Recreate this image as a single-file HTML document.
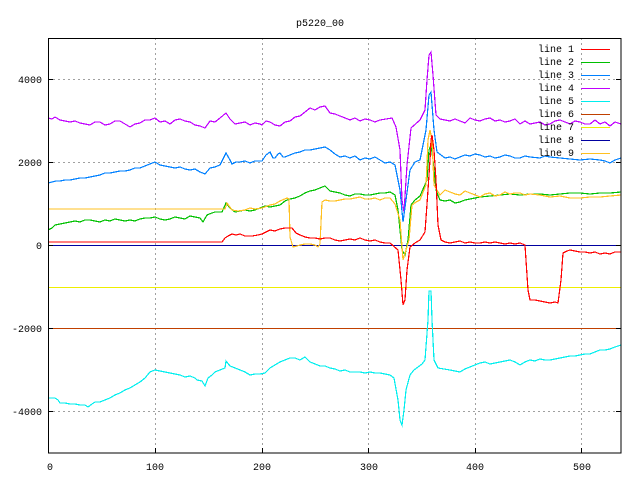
<!DOCTYPE html>
<html><head><meta charset="utf-8"><style>
html,body{margin:0;padding:0;background:#fff;}
svg{display:block;}
text{font-family:"Liberation Mono",monospace;font-size:10px;fill:#000;}
</style></head><body>
<svg width="640" height="480" viewBox="0 0 640 480" xmlns="http://www.w3.org/2000/svg" shape-rendering="crispEdges">
<rect width="640" height="480" fill="#fff"/>
<g stroke="#a0a0a0" stroke-width="1" stroke-dasharray="2,3" fill="none">
<line x1="155.5" y1="38" x2="155.5" y2="453"/>
<line x1="262.5" y1="38" x2="262.5" y2="453"/>
<line x1="368.5" y1="38" x2="368.5" y2="453"/>
<line x1="475.5" y1="38" x2="475.5" y2="453"/>
<line x1="581.5" y1="38" x2="581.5" y2="453"/>
<line x1="48" y1="79.5" x2="621" y2="79.5"/>
<line x1="48" y1="162.5" x2="621" y2="162.5"/>
<line x1="48" y1="328.5" x2="621" y2="328.5"/>
<line x1="48" y1="411.5" x2="621" y2="411.5"/>
</g>
<g fill="none" stroke-width="1.2">
<line x1="48" y1="287.5" x2="621" y2="287.5" stroke="#eeee00"/>
<line x1="48" y1="245.5" x2="621" y2="245.5" stroke="#0000a0"/>
<line x1="48" y1="328.5" x2="621" y2="328.5" stroke="#c04000"/>
<polyline stroke="#c000ff" points="48,118 52,119 55,117 60,120 65,121 70,122 75,121 80,123 85,124 90,125 95,122 100,122 105,125 110,124 115,121 120,121 125,124 130,127 135,124 140,123 145,120 150,120 155,118 160,122 165,121 170,124 175,120 180,119 185,121 190,122 195,125 200,126 205,128 210,121 215,122 220,118 226,113 230,119 235,124 240,123 245,122 250,125 255,123 260,124 262,125 266,121 270,122 275,125 280,126 285,122 290,121 295,117 300,116 305,112 310,108 315,110 320,107 325,106 330,113 335,114 340,116 345,118 350,120 355,118 360,121 365,119 370,120 375,122 380,120 386,119 392,118 396,127 400,150 402,200 404,212 407,165 411,128 420,120 425,110 427,80 429,55 431,52 433,75 436,115 440,119 445,120 450,121 455,119 460,121 465,123 470,118 475,120 480,121 485,119 490,118 495,121 500,120 505,122 510,121 515,119 520,124 525,121 530,124 535,123 540,122 545,125 550,124 555,121 560,120 565,122 570,124 575,121 580,122 585,124 590,124 595,120 600,124 605,122 610,126 615,122 621,124"/>
<polyline stroke="#0080ff" points="48,183 52,182 56,181 60,181 65,180 70,180 75,179 80,178 85,178 90,177 95,176 100,175 105,173 110,173 115,172 120,171 125,171 130,170 135,168 140,168 145,166 150,164 155,162 160,165 165,166 170,167 175,168 180,167 185,169 190,170 195,169 200,172 205,174 210,168 215,167 220,165 226,153 230,160 232,164 236,162 240,162 245,161 250,163 255,161 262,161 266,155 270,152 273,158 275,158 278,154 280,153 283,157 285,157 290,155 295,153 300,152 305,150 310,150 315,149 320,148 325,147 330,150 335,154 340,157 345,156 350,158 355,156 360,160 365,158 370,159 375,157 380,160 385,163 390,162 395,165 400,190 403,222 406,200 410,170 415,162 420,160 426,130 429,95 431,92 434,130 437,152 445,158 450,157 455,159 460,157 465,155 470,156 475,154 480,155 485,157 490,156 495,158 500,157 505,155 510,156 515,158 520,158 525,156 530,157 540,158 545,156 550,157 560,158 570,159 580,160 590,159 600,160 605,161 610,163 615,160 621,158"/>
<polyline stroke="#00c000" points="48,230 52,228 55,225 60,224 65,223 70,222 75,221 80,222 85,220 90,220 95,221 100,222 105,220 110,221 115,219 120,220 125,221 130,220 135,221 140,219 145,218 150,218 155,217 160,219 165,220 170,219 175,217 180,218 185,219 190,216 195,217 200,218 203,222 207,215 212,213 215,212 222,212 226,203 230,208 235,212 240,211 245,210 250,211 255,210 260,208 265,206 270,207 275,206 280,205 285,201 290,199 295,198 300,196 305,193 310,191 315,190 320,188 325,186 330,191 335,192 340,193 345,195 350,196 355,194 360,194 365,195 370,195 375,194 380,193 385,193 390,192 395,195 398,210 402,250 405,255 408,240 411,205 415,200 420,196 427,180 429,150 431,145 433,160 436,190 440,200 445,201 450,200 455,203 460,202 465,200 470,199 475,198 480,197 490,196 500,195 510,194 520,195 530,194 540,194 550,195 560,194 570,193 580,193 590,194 600,193 610,193 621,192"/>
<polyline stroke="#ffc020" points="48,209 225,209 227,203 232,210 238,211 245,210 250,208 255,209 262,208 270,205 275,204 280,201 287,198 289,199 290,237 293,247 297,246 300,245 305,244 310,244 315,245 318,247 320,244 322,202 325,200 330,201 335,201 340,200 345,199 350,199 355,198 360,197 365,199 370,199 375,198 380,200 385,198 390,198 395,204 400,220 403,260 406,250 409,240 412,205 416,202 420,200 426,185 428,140 430,130 432,140 434,185 440,195 445,190 450,192 455,194 460,195 465,191 470,193 475,195 480,197 485,194 490,193 495,196 500,195 505,192 510,194 515,193 520,193 525,195 530,194 540,195 550,197 560,196 570,198 580,198 590,197 600,197 610,196 621,195"/>
<polyline stroke="#ff0000" points="48,242 222,242 225,238 228,236 232,234 236,235 240,234 245,236 252,236 258,235 262,234 266,232 270,230 275,231 280,229 285,228 292,228 296,233 300,235 305,237 310,238 315,238 320,239 325,238 330,238 335,240 340,241 345,240 350,239 355,240 360,238 365,240 370,241 375,240 380,242 385,243 390,243 398,250 401,280 403,305 405,300 407,270 410,247 415,243 420,240 425,232 428,190 430,160 431,140 432,135 434,150 436,180 438,225 441,240 445,242 450,243 455,242 460,241 465,243 470,242 475,243 480,243 485,242 490,243 495,242 500,243 505,244 510,243 515,244 520,243 525,245 528,290 530,300 535,300 540,301 545,302 550,303 555,302 558,303 561,280 563,253 567,251 570,250 575,251 580,252 585,252 590,253 595,252 600,254 605,253 610,254 615,252 621,252"/>
<polyline stroke="#00eeee" points="48,398 52,398 55,398 58,400 60,403 65,403 70,404 75,404 80,405 85,405 88,407 92,404 95,402 100,402 105,400 110,398 115,395 120,393 125,390 130,388 135,385 140,382 145,378 150,372 155,370 160,371 165,372 170,373 175,374 180,375 185,377 190,376 195,378 197,380 202,381 205,386 208,378 212,375 215,372 220,370 225,368 226,361 230,366 235,368 240,370 245,372 250,375 255,374 260,374 265,373 270,368 275,365 280,362 285,360 290,358 295,358 300,360 305,357 310,362 315,364 320,366 325,366 330,368 335,369 340,371 345,370 350,372 355,372 360,372 365,373 370,372 375,373 380,373 385,374 390,375 394,378 398,400 400,420 402,425 404,410 406,390 410,375 414,370 418,367 422,364 425,360 428,320 429,291 431,291 432,320 434,360 438,368 444,369 450,370 455,371 460,372 465,369 470,367 475,365 480,363 485,362 490,364 495,363 500,362 505,361 510,360 515,362 520,365 525,362 530,360 535,361 540,359 545,360 550,360 555,359 560,358 565,357 570,356 575,356 580,355 585,354 590,354 595,352 600,350 605,350 610,349 615,347 621,345"/>
</g>
<rect x="48.5" y="38.5" width="572.5" height="414.5" fill="none" stroke="#000" stroke-width="1"/>
<g stroke="#000">
<line x1="48" y1="79.5" x2="53" y2="79.5"/><line x1="616" y1="79.5" x2="621" y2="79.5"/>
<line x1="48" y1="162.5" x2="53" y2="162.5"/><line x1="616" y1="162.5" x2="621" y2="162.5"/>
<line x1="48" y1="245.5" x2="53" y2="245.5"/><line x1="616" y1="245.5" x2="621" y2="245.5"/>
<line x1="48" y1="328.5" x2="53" y2="328.5"/><line x1="616" y1="328.5" x2="621" y2="328.5"/>
<line x1="48" y1="411.5" x2="53" y2="411.5"/><line x1="616" y1="411.5" x2="621" y2="411.5"/>
<line x1="155.5" y1="448" x2="155.5" y2="453"/><line x1="262.5" y1="448" x2="262.5" y2="453"/>
<line x1="368.5" y1="448" x2="368.5" y2="453"/><line x1="475.5" y1="448" x2="475.5" y2="453"/>
<line x1="581.5" y1="448" x2="581.5" y2="453"/>
</g>
<text x="320" y="26" text-anchor="middle">p5220_00</text>
<g text-anchor="end">
<text x="42" y="83">4000</text><text x="42" y="166">2000</text><text x="42" y="249">0</text>
<text x="42" y="332">-2000</text><text x="42" y="415">-4000</text>
</g>
<g text-anchor="middle">
<text x="50" y="470">0</text><text x="155" y="470">100</text><text x="262" y="470">200</text>
<text x="369" y="470">300</text><text x="475" y="470">400</text><text x="582" y="470">500</text>
</g>
<g text-anchor="end">
<text x="574" y="52">line 1</text><text x="574" y="65">line 2</text><text x="574" y="78">line 3</text>
<text x="574" y="91">line 4</text><text x="574" y="104">line 5</text><text x="574" y="117">line 6</text>
<text x="574" y="130">line 7</text><text x="574" y="143">line 8</text><text x="574" y="156">line 9</text>
</g>
<g stroke-width="1.2">
<line x1="581" y1="49.5" x2="610" y2="49.5" stroke="#ff0000"/>
<line x1="581" y1="62.5" x2="610" y2="62.5" stroke="#00c000"/>
<line x1="581" y1="75.5" x2="610" y2="75.5" stroke="#0080ff"/>
<line x1="581" y1="88.5" x2="610" y2="88.5" stroke="#c000ff"/>
<line x1="581" y1="101.5" x2="610" y2="101.5" stroke="#00eeee"/>
<line x1="581" y1="114.5" x2="610" y2="114.5" stroke="#c04000"/>
<line x1="581" y1="127.5" x2="610" y2="127.5" stroke="#eeee00"/>
<line x1="581" y1="140.5" x2="610" y2="140.5" stroke="#0000a0"/>
<line x1="581" y1="153.5" x2="610" y2="153.5" stroke="#ffc020"/>
</g>
</svg>
</body></html>
